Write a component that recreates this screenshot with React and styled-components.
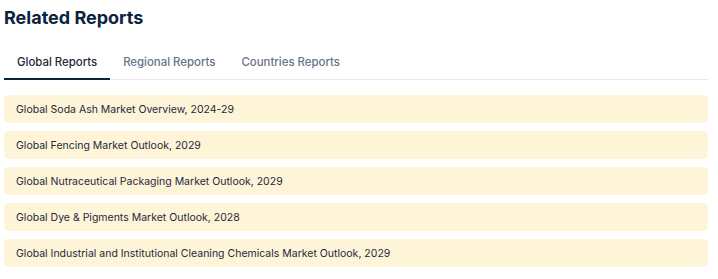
import React, { useState } from "react";
import styled, { createGlobalStyle } from "styled-components";

const GlobalStyle = createGlobalStyle`
    body {
        margin: 0;
        background: #fff;
        font-family: Inter, "Liberation Sans", sans-serif;
    }
`;

const Section = styled.section`
    width: 704px;
    padding: 0 4px;
`;

const Title = styled.h2`
    margin: 0;
    padding-top: 6px;
    font-size: 18px;
    line-height: 24px;
    font-weight: 700;
    color: #0c2340;
`;

const TabBar = styled.div`
    display: flex;
    margin-top: 15px;
    border-bottom: 1px solid #e5e7eb;
`;

const Tab = styled.button`
    border: none;
    background: none;
    padding: 0 13px;
    height: 35px;
    margin-bottom: -1px;
    font-family: inherit;
    font-size: 11.4px;
    font-weight: 500;
    cursor: pointer;
    color: ${(props) => (props.active ? "#1f2937" : "#64748b")};
    border-bottom: 2px solid ${(props) => (props.active ? "#0c2340" : "transparent")};
`;

const List = styled.ul`
    list-style: none;
    margin: 15px 0 0;
    padding: 0;
    display: flex;
    flex-direction: column;
    gap: 8px;
`;

const Item = styled.li`
    height: 28px;
    display: flex;
    align-items: center;
    padding: 0 12px;
    background: #fef4d8;
    border-radius: 5px;
    font-size: 10.5px;
    color: #1e293b;
`;

const tabs = ["Global Reports", "Regional Reports", "Countries Reports"];

const reports = [
    "Global Soda Ash Market Overview, 2024-29",
    "Global Fencing Market Outlook, 2029",
    "Global Nutraceutical Packaging Market Outlook, 2029",
    "Global Dye & Pigments Market Outlook, 2028",
    "Global Industrial and Institutional Cleaning Chemicals Market Outlook, 2029",
];

export default function App() {
    const [active, setActive] = useState(0);
    return (
        <Section>
            <GlobalStyle />
            <Title>Related Reports</Title>
            <TabBar>
                {tabs.map((t, i) => (
                    <Tab key={t} active={i === active} onClick={() => setActive(i)}>
                        {t}
                    </Tab>
                ))}
            </TabBar>
            <List>
                {reports.map((r) => (
                    <Item key={r}>{r}</Item>
                ))}
            </List>
        </Section>
    );
}
